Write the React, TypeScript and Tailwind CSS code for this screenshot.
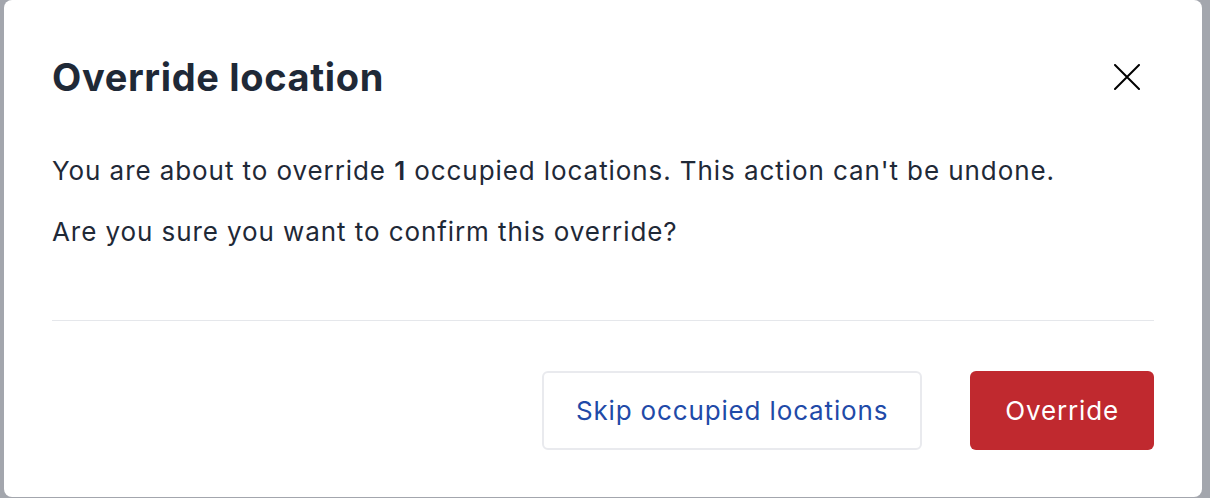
export default function App() {
  return (
    <div
      className="h-[498px] w-[1210px] bg-[#a3a6ad] pl-[4px] overflow-hidden"
      style={{ fontFamily: 'Inter, "Noto Sans", sans-serif' }}
    >
      <div
        role="dialog"
        aria-modal="true"
        className="flex h-[497px] w-[1198px] flex-col rounded-lg bg-white px-[48px] text-[#1f2937]"
      >
        <div className="flex items-center justify-between pt-[55px]">
          <h2 className="text-[38px] leading-[44px] font-bold tracking-[0.65px]">Override location</h2>
          <button className="mr-[14px] text-black" aria-label="Close">
            <svg width="26" height="26" viewBox="0 0 26 26" fill="none" stroke="currentColor" strokeWidth="2" strokeLinecap="round">
              <path d="M1 1 L25 25 M25 1 L1 25" />
            </svg>
          </button>
        </div>

        <div className="mt-[56px] flex flex-col gap-[29px] text-[26px] leading-[32px] tracking-[0.92px]">
          <p>
            You are about to override <strong className="font-semibold">1</strong> occupied locations. This action can't be undone.
          </p>
          <p>Are you sure you want to confirm this override?</p>
        </div>

        <div className="mt-[72px] border-t border-[#e5e7eb]" />

        <div className="mt-[50px] flex justify-end gap-[48px] text-[26px] tracking-[0.85px]">
          <button className="h-[79px] rounded-md border-2 border-[#e9eaee] bg-white px-[32px] text-[#1f4aa8]">
            Skip occupied locations
          </button>
          <button className="h-[79px] rounded-md bg-[#c0292f] px-[35px] text-white">
            Override
          </button>
        </div>
      </div>
    </div>
  );
}
